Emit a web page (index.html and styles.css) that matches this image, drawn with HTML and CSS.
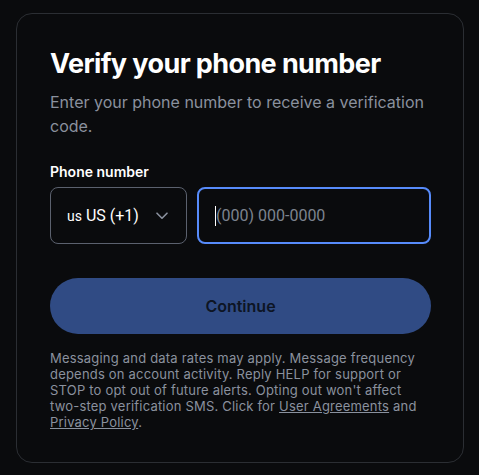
FILE: index.html
```html
<!DOCTYPE html>
<html lang="en">
<head>
<meta charset="utf-8">
<title>Verify your phone number</title>
<link rel="stylesheet" href="styles.css">
</head>
<body>
<main class="card">
  <h1 class="title">Verify your phone number</h1>
  <p class="subtitle">Enter your phone number to receive a verification code.</p>
  <label class="label">Phone number</label>
  <div class="phone-row">
    <div class="select">
      <span class="flag">us</span>&nbsp;<span class="code">US (+1)</span>
      <svg class="chevron" width="12" height="8" viewBox="0 0 12 8" aria-hidden="true"><path d="M1 1.2 L6 6.2 L11 1.2" fill="none" stroke="#8a919e" stroke-width="1.6" stroke-linecap="round" stroke-linejoin="round"/></svg>
    </div>
    <div class="input"><span class="caret"></span><span class="placeholder">(000) 000-0000</span></div>
  </div>
  <button class="continue" type="button">Continue</button>
  <p class="legal">Messaging and data rates may apply. Message frequency depends on account activity. Reply HELP for support or STOP to opt out of future alerts. Opting out won't affect two-step verification SMS. Click for <a href="#">User Agreements</a> and <a href="#">Privacy Policy</a>.</p>
</main>
</body>
</html>
```
FILE: styles.css
```css
* { box-sizing: border-box; }
html, body { margin: 0; padding: 0; background: #0a0b0d; }
body {
  font-family: Inter, "Noto Sans", "Liberation Sans", sans-serif;
  color: #ffffff;
  padding: 13px 15px 0 16px;
}
.card {
  width: 448px;
  height: 450px;
  border: 1px solid #2b2e33;
  border-radius: 16px;
  padding: 32px 32px 32px 33px;
  display: flex;
  flex-direction: column;
}
.title {
  margin: 0;
  font-size: 27px;
  line-height: 36px;
  font-weight: 700;
  letter-spacing: -0.6px;
}
.subtitle {
  margin: 8px 0 0;
  font-size: 16px;
  line-height: 24px;
  color: #8a919e;
}
.label {
  margin-top: 24px;
  font-size: 14px;
  line-height: 20px;
  font-weight: 600;
}
.phone-row {
  margin-top: 5px;
  display: flex;
  gap: 10px;
  height: 57px;
}
.select {
  width: 137px;
  border: 1px solid #5b616e;
  border-radius: 8px;
  display: flex;
  align-items: center;
  padding: 0 0 0 16px;
  font-family: Roboto, "Liberation Sans", sans-serif;
  font-size: 16px;
}
.flag { font-size: 14px; }
.code { flex: 0 0 auto; }
.chevron { margin-left: 17px; margin-top: 1px; }
.input {
  flex: 1;
  border: 2px solid #578bfa;
  border-radius: 8px;
  display: flex;
  align-items: center;
  padding-left: 17px;
  font-family: Roboto, "Liberation Sans", sans-serif;
  font-size: 16px;
  position: relative;
}
.caret {
  position: absolute;
  left: 16px;
  top: 17px;
  width: 1px;
  height: 20px;
  background: #ffffff;
}
.placeholder { color: #7d838f; }
.continue {
  margin-top: 34px;
  height: 56px;
  width: 100%;
  border: none;
  border-radius: 28px;
  background: #304b84;
  color: #0d1524;
  font-family: inherit;
  font-size: 16px;
  font-weight: 600;
  padding: 0;
}
.legal {
  margin: 16px 0 0;
  font-size: 13px;
  line-height: 16px;
  letter-spacing: 0.2px;
  color: #8a919e;
}
.legal a { color: #8a919e; text-decoration: underline; }
```
